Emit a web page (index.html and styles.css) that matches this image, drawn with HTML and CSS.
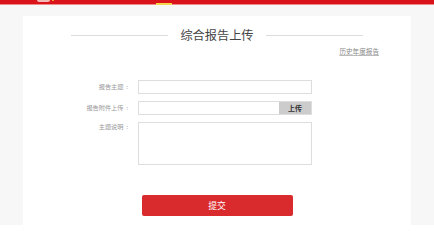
FILE: index.html
```html
<!DOCTYPE html>
<html lang="zh">
<head>
<meta charset="utf-8">
<title>综合报告上传</title>
<link rel="stylesheet" href="styles.css">
</head>
<body>
<header class="topbar">
  <span class="logo-bit"></span><span class="logo-dot"></span>
  <span class="nav-active"></span>
</header>
<main class="page">
  <section class="card">
    <div class="title-row">
      <span class="rule"></span>
      <h1 class="title">综合报告上传</h1>
      <span class="rule"></span>
    </div>
    <div class="link-row"><a class="history" href="#">历史年度报告</a></div>
    <form class="form">
      <label class="label">报告主题&nbsp;&nbsp;:</label>
      <input class="input" type="text">
      <label class="label">报告附件上传&nbsp;&nbsp;:</label>
      <div class="file">
        <span class="file-name"></span>
        <span class="file-btn">上传</span>
      </div>
      <label class="label label-top">主题说明&nbsp;&nbsp;:</label>
      <textarea class="textarea"></textarea>
    </form>
    <div class="submit-row"><button class="submit" type="button">提交</button></div>
  </section>
</main>
</body>
</html>
```
FILE: styles.css
```css
* { box-sizing: border-box; }
html, body { margin: 0; padding: 0; background: #fff; }
body { font-family: "Noto Sans CJK SC", "Noto Sans", sans-serif; width: 434px; }

.topbar {
  position: relative;
  height: 5px;
  background: #da1219;
  border-bottom: 1px solid #ef8a8c;
}
.logo-bit {
  position: absolute; left: 37px; top: 0; width: 13px; height: 2px;
  background: #f3b8b8; border-radius: 0 0 6px 6px;
}
.logo-dot {
  position: absolute; left: 52px; top: 0; width: 2px; height: 1px; background: #f39a2a;
}
.nav-active {
  position: absolute; left: 156px; top: 3px; width: 16px; height: 2px; background: #f5d54a;
}

.page {
  background: #f7f7f7;
  padding: 11px 23px 0;
}
.card {
  background: #fff;
  height: 209px;
  padding: 12px 32px 0;
}
.title-row {
  display: flex; align-items: center; justify-content: center; gap: 12px;
  height: 14px;
}
.rule { width: 97px; height: 1px; background: #dcdcdc; }
.title {
  margin: 0; font-size: 12.2px; line-height: 14px; font-weight: normal; color: #444;
}
.link-row {
  margin-top: 5px; display: flex; justify-content: flex-end; height: 9px;
}
.history {
  font-size: 6.6px; line-height: 9px; color: #888; text-decoration: underline;
  text-decoration-color: #bbb;
}
.form {
  margin-top: 24px;
  margin-left: -32px;
  display: grid;
  grid-template-columns: 105px 174px;
  column-gap: 10px;
  row-gap: 7px;
}
.label {
  font-size: 6.2px; color: #999; text-align: right; line-height: 14px; white-space: nowrap;
}
.label-top { line-height: 10px; }
.input, .file, .textarea {
  border: 1px solid #dedede; background: #fff; margin: 0; padding: 0;
  box-shadow: inset 0 0 1px rgba(0,0,0,0.04);
}
.input { height: 14px; }
.file { height: 14px; display: flex; }
.file-name { flex: 1; }
.file-btn {
  width: 32px; background: #cccccc; color: #333; font-size: 7px; font-weight: bold;
  display: flex; align-items: center; justify-content: center; line-height: 1;
}
.textarea { height: 43px; resize: none; display: block; }
.submit-row { margin-top: 30px; display: flex; justify-content: center; }
.submit {
  width: 151px; height: 21px; border: none; border-radius: 2px;
  background: #d92b2d; color: #fff; font-family: inherit; font-size: 8.8px; padding: 0;
}
```
